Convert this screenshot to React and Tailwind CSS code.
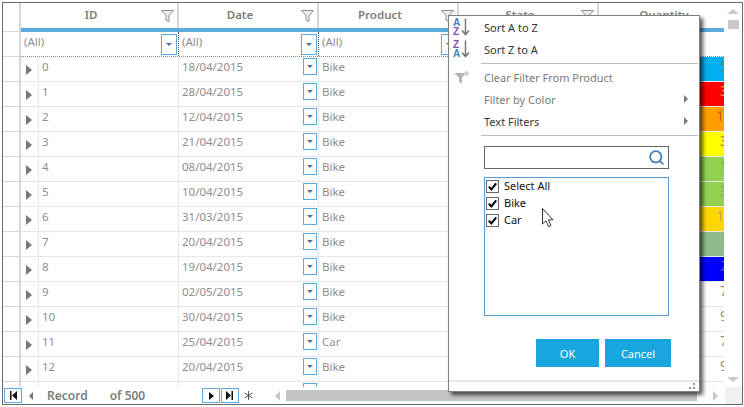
import React from 'react';
import { Search } from 'lucide-react';

const rows = [
  { id: 0, date: '18/04/2015', product: 'Bike', qty: '5', bg: 'bg-[#00b0f0]', fg: 'text-[#2e9e6a]' },
  { id: 1, date: '28/04/2015', product: 'Bike', qty: '3', bg: 'bg-[#ff0000]', fg: 'text-[#e8a020]' },
  { id: 2, date: '12/04/2015', product: 'Bike', qty: '11', bg: 'bg-[#ffa000]', fg: 'text-[#c8582a]' },
  { id: 3, date: '21/04/2015', product: 'Bike', qty: '3', bg: 'bg-[#ffff00]', fg: 'text-[#d06a40]' },
  { id: 4, date: '08/04/2015', product: 'Bike', qty: '1', bg: 'bg-[#92d050]', fg: 'text-[#5fae60]' },
  { id: 5, date: '10/04/2015', product: 'Bike', qty: '3', bg: 'bg-[#92d050]', fg: 'text-[#88a868]' },
  { id: 6, date: '31/03/2015', product: 'Bike', qty: '10', bg: 'bg-[#ffd700]', fg: 'text-[#c0a860]' },
  { id: 7, date: '20/04/2015', product: 'Bike', qty: '1', bg: 'bg-[#8fbc8f]', fg: 'text-[#80a880]' },
  { id: 8, date: '19/04/2015', product: 'Bike', qty: '2', bg: 'bg-[#0000ff]', fg: 'text-[#4848c8]' },
  { id: 9, date: '02/05/2015', product: 'Bike', qty: '7', bg: 'bg-white', fg: 'text-[#9a8a70]' },
  { id: 10, date: '30/04/2015', product: 'Bike', qty: '9', bg: 'bg-white', fg: 'text-[#9a8a70]' },
  { id: 11, date: '25/04/2015', product: 'Car', qty: '7', bg: 'bg-white', fg: 'text-[#9a8a70]' },
  { id: 12, date: '20/04/2015', product: 'Bike', qty: '9', bg: 'bg-white', fg: 'text-[#9a8a70]' },
  { id: 13, date: '', product: '', qty: '', bg: 'bg-white', fg: 'text-[#9a8a70]' },
];

function Funnel() {
  return (
    <svg width="13" height="12" viewBox="0 0 13 12" className="shrink-0">
      <path d="M0.5 0.5H12.5L8 5.5V11.5L5 10V5.5Z" fill="#ececec" stroke="#8f8f8f" strokeWidth="1" />
    </svg>
  );
}

function ComboButton({ tall }) {
  return (
    <div className={`flex items-center justify-center border border-[#5aaadd] bg-white ${tall ? 'w-[16px] h-[21px]' : 'w-[14px] h-[17px]'}`}>
      <div className="w-0 h-0 border-x-[3px] border-x-transparent border-t-[3px] border-t-[#4f6f9f]" />
    </div>
  );
}

function HeaderCell({ label, className }) {
  return (
    <div className={`flex items-center border-r-2 border-[#d6d6d6] relative ${className}`}>
      <span className="flex-1 pb-[2px] text-center font-semibold text-[#7d7d7d]">{label}</span>
      <div className="pr-[2px] mr-[1px]"><Funnel /></div>
    </div>
  );
}

function FilterCell({ className }) {
  return (
    <div className={`flex items-center justify-between border-r border-dotted border-[#555] pl-[3px] pr-[1px] ${className}`}>
      <span className="pb-[5px] text-[#8e8e8e]">(All)</span>
      <ComboButton tall />
    </div>
  );
}

function SortIcon({ top, bottom, topColor, bottomColor }) {
  return (
    <svg width="18" height="18" viewBox="0 0 18 18">
      <text x="0" y="7.5" fontSize="10" fontWeight="700" fontFamily="Liberation Sans, sans-serif" fill={topColor}>{top}</text>
      <text x="0" y="16.5" fontSize="10" fontWeight="700" fontFamily="Liberation Sans, sans-serif" fill={bottomColor}>{bottom}</text>
      <path d="M12.5 0.5V16M9 12.5L12.5 16.5L16 12.5" fill="none" stroke="#777" strokeWidth="1.5" />
    </svg>
  );
}

function MenuRow({ icon, label, muted, arrow, iconPad }) {
  return (
    <div className="flex items-center h-[22px]">
      <div className={`w-[35px] flex shrink-0 ${iconPad ? 'pl-[5px]' : 'pl-[4px]'}`}>{icon}</div>
      <span className={`flex-1 ${muted ? 'text-[#7a7a7a]' : 'text-[#333]'}`}>{label}</span>
      {arrow && <div className="mr-[11px] w-0 h-0 border-y-[4px] border-y-transparent border-l-[4px] border-l-[#777]" />}
    </div>
  );
}

function CheckRow({ label }) {
  return (
    <div className="flex items-center h-[17px] gap-[5px]">
      <div className="w-[13px] h-[13px] border border-[#666] flex items-center justify-center bg-white">
        <svg width="9" height="9" viewBox="0 0 9 9">
          <path d="M0.8 4.6L3.4 7.4L8.2 1.4" fill="none" stroke="#000" strokeWidth="2" />
        </svg>
      </div>
      <span className="pb-[2px] text-[#111]">{label}</span>
    </div>
  );
}

function NavButton({ children }) {
  return (
    <div className="flex items-center justify-center w-[18px] h-[15px] border border-[#5aaadd]">{children}</div>
  );
}

function FilterMenu() {
  return (
    <div className="absolute left-[448px] top-[15px] w-[252px] h-[377px] bg-white border border-[#808080] shadow-[3px_3px_4px_rgba(0,0,0,0.65)] flex flex-col text-[11px]">
      <MenuRow label="Sort A to Z" icon={<SortIcon top="A" bottom="Z" topColor="#3f7fc0" bottomColor="#8a4fb0" />} />
      <MenuRow label="Sort Z to A" icon={<SortIcon top="Z" bottom="A" topColor="#8a4fb0" bottomColor="#3f7fc0" />} />
      <div className="h-px bg-[#bdbdbd] ml-[32px] mr-[1px] mt-[3px] mb-[2px]" />
      <MenuRow
        muted
        iconPad
        label="Clear Filter From Product"
        icon={
          <svg width="16" height="13" viewBox="0 0 16 13">
            <path d="M0 2H12L8 6.5V12.5L5 11V6.5Z" fill="#b5b5b5" />
            <circle cx="12.5" cy="2.5" r="2.5" fill="#d2d2d2" />
          </svg>
        }
      />
      <MenuRow muted arrow label="Filter by Color" />
      <MenuRow arrow label="Text Filters" />
      <div className="h-px bg-[#bdbdbd] ml-[32px] mr-[1px] mt-[3px]" />
      <div className="ml-[35px] w-[185px] h-[23px] mt-[10px] border border-[#666] flex items-center justify-end pr-[3px]">
        <Search size={17} strokeWidth={2.5} className="text-[#3f7fb5]" />
      </div>
      <div className="ml-[35px] w-[185px] h-[139px] mt-[8px] border border-[#5b9bd5] pl-[1px]">
        <CheckRow label="Select All" />
        <CheckRow label="Bike" />
        <CheckRow label="Car" />
      </div>
      <div className="flex justify-end gap-[6px] mt-[23px] mr-[28px]">
        <div className="w-[63px] h-[28px] bg-[#17a6dd] text-white flex items-center justify-center">OK</div>
        <div className="w-[66px] h-[28px] bg-[#17a6dd] text-white flex items-center justify-center">Cancel</div>
      </div>
      <div className="mt-auto h-[11px] border-t-2 border-[#e2e8e8] flex justify-end items-end pr-[3px] pb-[1px]">
        <svg width="7" height="7" viewBox="0 0 7 7">
          <path d="M4 0h2v2H4zM0 4h2v2H0zM4 4h2v2H4z" fill="#9a9a9a" />
        </svg>
      </div>
    </div>
  );
}

export default function App() {
  return (
    <div className="relative w-[744px] h-[407px] bg-white overflow-hidden text-[11.5px] leading-none font-['Noto_Sans',sans-serif]">
      <div className="absolute left-[2px] top-[2px] w-[741px] h-[403px] border border-[#6a6a6a] flex flex-col">
        <div className="flex h-[384px]">
          {/* Grid */}
          <div className="w-[721px] overflow-hidden">
            <div className="flex h-[25px]">
              <div className="w-[18px] border-r-2 border-[#d6d6d6]" />
              <HeaderCell label="ID" className="w-[158px]" />
              <HeaderCell label="Date" className="w-[140px]" />
              <HeaderCell label="Product" className="w-[140px]" />
              <HeaderCell label="State" className="w-[140px]" />
              <div className="w-[125px] flex items-center justify-center pl-[5px] pb-[2px] font-semibold text-[#7d7d7d]">Quantity</div>
            </div>
            <div className="flex h-[4px]">
              <div className="w-[18px] border-r-2 border-b border-[#d6d6d6]" />
              <div className="flex-1 bg-[#5aaadd]" />
            </div>
            <div className="flex h-[25px]">
              <div className="w-[18px] border-r-2 border-b border-[#d6d6d6]" />
              <div className="flex flex-1 border-b border-dotted border-[#6f8fb5]">
                <FilterCell className="w-[158px]" />
                <FilterCell className="w-[140px]" />
                <FilterCell className="w-[140px]" />
                <FilterCell className="w-[140px]" />
              </div>
            </div>
            {rows.map((row) => (
              <div key={row.id} className="flex h-[25px]">
                <div className="w-[18px] border-r-2 border-b border-[#d6d6d6]" />
                <div className="w-[158px] flex border-r border-b border-[#e8e8e8]">
                  <div className="w-[18px] border-r border-[#e8e8e8] flex items-center justify-center pr-[1px] pt-[1px]">
                    <div className="w-0 h-0 border-y-[5px] border-y-transparent border-l-[6px] border-l-[#777]" />
                  </div>
                  <span className="pl-[3px] leading-[19px] text-[#8e8e8e]">{row.id}</span>
                </div>
                <div className="w-[140px] flex justify-between border-r border-b border-[#e8e8e8] pl-[3px] pr-[1px] pt-[1px]">
                  <span className="leading-[18px] text-[#8e8e8e]">{row.date}</span>
                  <ComboButton />
                </div>
                <div className="w-[140px] border-r border-b border-[#e8e8e8] pl-[3px] leading-[19px] text-[#8e8e8e]">{row.product}</div>
                <div className="w-[140px] border-r border-b border-[#e8e8e8]" />
                <div className={`w-[125px] flex justify-end overflow-hidden border-b border-[#e8e8e8] ${row.bg}`}>
                  <span className={`w-[16px] mr-[-8px] shrink-0 text-center leading-[18px] text-[14px] ${row.fg}`}>{row.qty}</span>
                </div>
              </div>
            ))}
          </div>
          {/* Vertical scrollbar */}
          <div className="flex-1 flex flex-col items-center">
            <div className="mt-[6px] w-0 h-0 border-x-[6px] border-x-transparent border-b-[5px] border-b-[#c8c8c8]" />
            <div className="mt-[6px] w-[11px] h-[9px] bg-[#c8c8c8]" />
            <div className="mt-auto mb-[5px] w-0 h-0 border-x-[6px] border-x-transparent border-t-[5px] border-t-[#c8c8c8]" />
          </div>
        </div>
        {/* Footer */}
        <div className="flex flex-1 items-center text-[12px]">
          <div className="flex items-center flex-1 pl-[1px]">
            <NavButton>
              <svg width="8" height="9" viewBox="0 0 8 9"><path d="M1 0h1.5v9H1zM8 0v9L3 4.5z" fill="#111" /></svg>
            </NavButton>
            <div className="ml-[7px] w-0 h-0 border-y-[4px] border-y-transparent border-r-[4px] border-r-[#777]" />
            <span className="ml-[14px] font-semibold text-[#7d7d7d]">Record</span>
            <span className="ml-[22px] font-semibold text-[#7d7d7d]">of 500</span>
            <div className="ml-[57px] flex gap-[1px]">
              <NavButton>
                <div className="w-0 h-0 border-y-[4px] border-y-transparent border-l-[5px] border-l-[#111]" />
              </NavButton>
              <NavButton>
                <svg width="8" height="9" viewBox="0 0 8 9"><path d="M0 0v9l5-4.5zM5.5 0H7v9H5.5z" fill="#111" /></svg>
              </NavButton>
            </div>
            <svg width="9" height="9" viewBox="0 0 9 9" className="ml-[5px]">
              <path d="M4.5 0V9M0.5 2L8.5 7M8.5 2L0.5 7" stroke="#555" strokeWidth="1" />
            </svg>
            <div className="ml-[22px] w-0 h-0 border-y-[5px] border-y-transparent border-r-[5px] border-r-[#c8c8c8]" />
            <div className="ml-[6px] w-[411px] h-[11px] bg-[#c4c4c4]" />
            <div className="ml-[16px] w-0 h-0 border-y-[5px] border-y-transparent border-l-[5px] border-l-[#c8c8c8]" />
          </div>
          <div className="w-[17px] h-full bg-[#f0f0f0]" />
        </div>
      </div>
      <FilterMenu />
      {/* Mouse pointer */}
      <svg width="13" height="20" viewBox="0 0 13 20" className="absolute left-[542px] top-[208px]">
        <path d="M0.5 0.5V16L4 12.8L6.6 18.6L9 17.5L6.4 11.8H11Z" fill="#fff" stroke="#333" strokeWidth="1" />
      </svg>
    </div>
  );
}
